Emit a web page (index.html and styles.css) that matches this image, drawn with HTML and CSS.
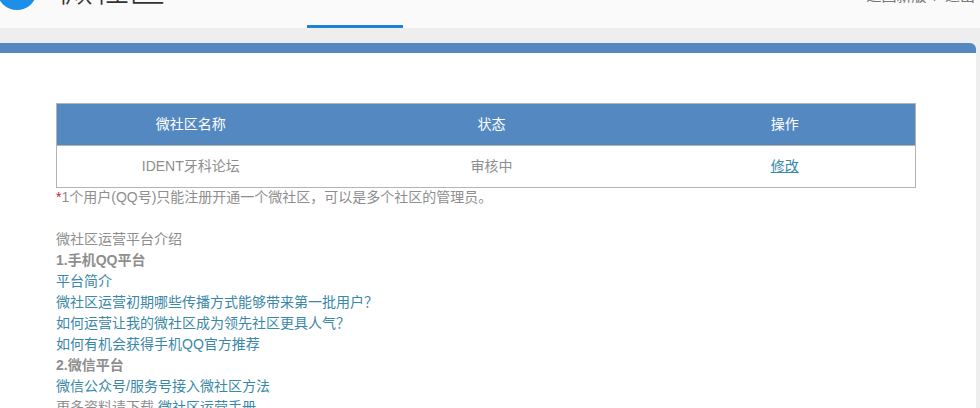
FILE: index.html
```html
<!DOCTYPE html>
<html lang="zh-CN">
  <head>
    <meta charset="UTF-8" />
    <title>微社区</title>
    <link rel="stylesheet" href="styles.css">
  </head>
  <body>
    <div class="header">
      <div class="logo">
        <span class="logo-dot"></span>
        <span class="logo-text">微社区</span>
      </div>
      <div class="nav-tab"></div>
      <div class="user-links">返回新版 / 退出</div>
    </div>
    <div class="panel">
      <div class="panel-bar"></div>
      <div class="panel-body">
        <table class="site-table">
          <tr>
            <th class="col-name">微社区名称</th>
            <th class="col-state">状态</th>
            <th>操作</th>
          </tr>
          <tr>
            <td>IDENT牙科论坛</td>
            <td>审核中</td>
            <td><a href="#" class="edit-link">修改</a></td>
          </tr>
        </table>
        <p class="note"><span class="star">*</span>1个用户(QQ号)只能注册开通一个微社区，可以是多个社区的管理员。</p>
        <div class="intro">
          <div>微社区运营平台介绍</div>
          <div class="sub-title">1.手机QQ平台</div>
          <div><a href="#">平台简介</a></div>
          <div><a href="#">微社区运营初期哪些传播方式能够带来第一批用户？</a></div>
          <div><a href="#">如何运营让我的微社区成为领先社区更具人气？</a></div>
          <div><a href="#">如何有机会获得手机QQ官方推荐</a></div>
          <div class="sub-title">2.微信平台</div>
          <div><a href="#">微信公众号/服务号接入微社区方法</a></div>
          <div>更多资料请下载 <a href="#">微社区运营手册</a></div>
        </div>
      </div>
    </div>
  </body>
</html>
```

FILE: styles.css
```css
html,
body {
  height: 408px;
  overflow: hidden;
}

body {
  margin: 0;
  background: #eeeeee;
  font-family: "Liberation Sans", "Noto Sans CJK SC", sans-serif;
  font-size: 14px;
  color: #8e8e8e;
}

a {
  color: #3a87a8;
  text-decoration: none;
}

.header {
  display: flex;
  align-items: flex-end;
  height: 28px;
  background: #fafafa;
  overflow: hidden;
}

.logo {
  display: flex;
  align-items: center;
  gap: 20px;
  width: 307px;
  height: 48px;
  flex: none;
  align-self: flex-end;
  margin-bottom: 14px;
}

.logo-dot {
  width: 40px;
  height: 40px;
  margin-left: -3px;
  border-radius: 50%;
  background: #1e8fe8;
}

.logo-text {
  font-size: 36px;
  font-weight: 300;
  line-height: 48px;
  color: #333333;
}

.nav-tab {
  width: 96px;
  height: 3px;
  background: #1c82d8;
}

.user-links {
  align-self: flex-start;
  margin: -12px 5px 0 auto;
  font-size: 15px;
  line-height: 16px;
  word-spacing: 3px;
  white-space: nowrap;
  color: #777777;
}

.panel {
  width: 976px;
  margin-top: 15px;
  background: #ffffff;
  border-top-right-radius: 6px;
  overflow: hidden;
}

.panel-bar {
  height: 10px;
  background: #5389c0;
}

.panel-body {
  padding: 50px 60px 40px 56px;
}

.site-table {
  width: 860px;
  table-layout: fixed;
  border-collapse: collapse;
  border: 1px solid #b4b4b4;
}

.site-table th,
.site-table td {
  box-sizing: border-box;
  height: 42px;
  padding: 0 0 4px;
}

.site-table th:nth-child(odd),
.site-table td:nth-child(odd) {
  padding-right: 2px;
}

.site-table th {
  background: #5389c0;
  font-weight: normal;
  color: #ffffff;
}

.site-table td {
  text-align: center;
  border-top: 1px solid #b4b4b4;
}

.col-name {
  width: 270px;
}

.col-state {
  width: 330px;
}

.edit-link {
  text-decoration: underline;
}

.note {
  margin: -1px 0 21px;
  line-height: 21px;
}

.star {
  color: #cc2222;
}

.intro {
  line-height: 21px;
}

.sub-title {
  font-weight: bold;
}
```
